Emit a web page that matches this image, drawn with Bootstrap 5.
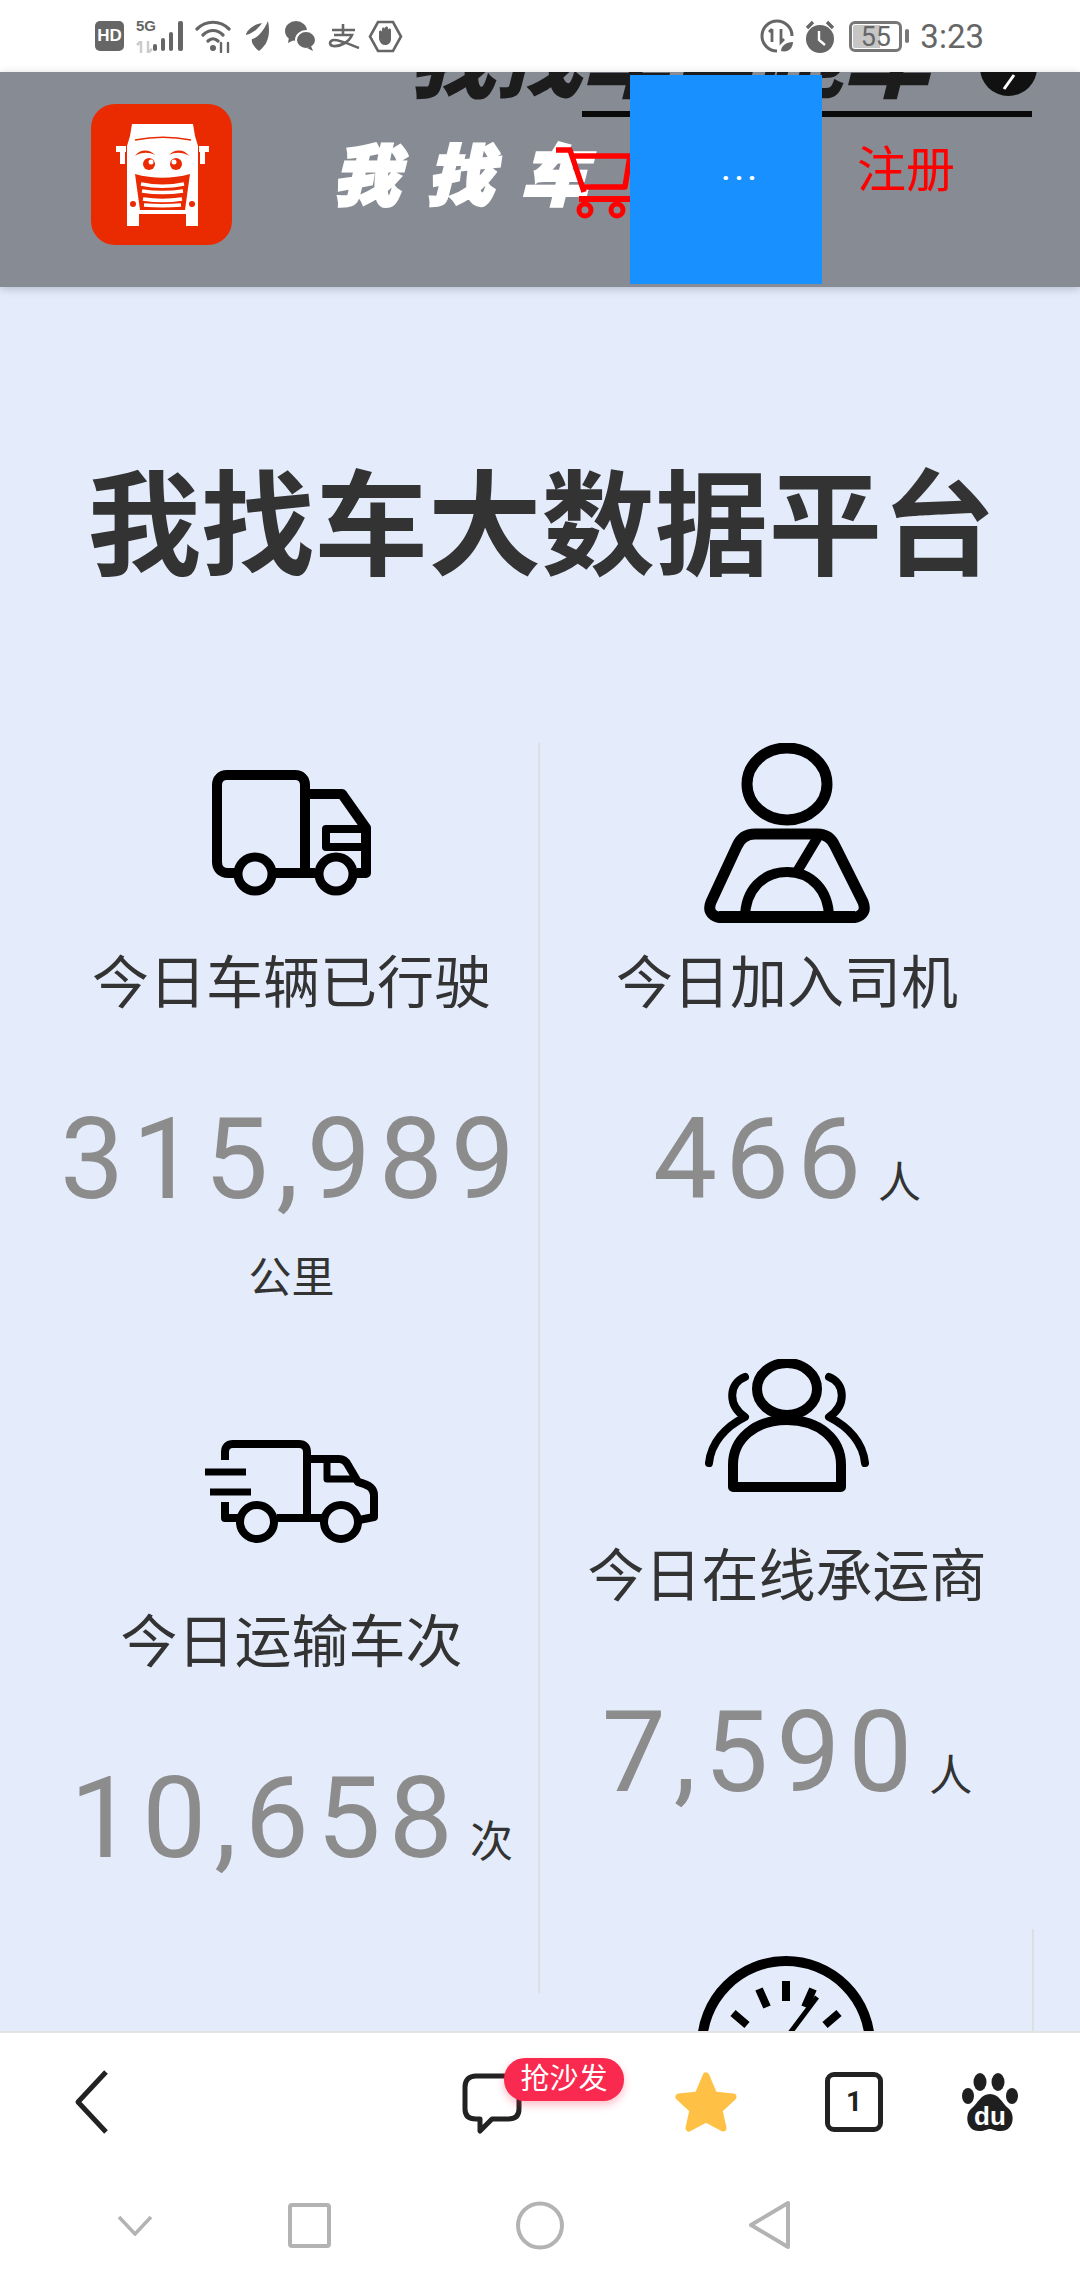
<!DOCTYPE html>
<html lang="zh-CN">
<head>
<meta charset="UTF-8">
<title>我找车大数据平台</title>
<link href="https://cdn.jsdelivr.net/npm/bootstrap@5.3.3/dist/css/bootstrap.min.css" rel="stylesheet">
<style>
    html, body { height: 100%; overflow: hidden; }
    body { background: #e4ecfb; font-family: Roboto, "Noto Sans CJK SC", sans-serif; color: #333; }
    .phone { height: 2280px; }

    .status-bar { height: 72px; padding: 0 96px 0 95px; color: #666; flex: none; }
    .status-bar svg { display: block; flex: none; }
    .gap-9 { margin-left: 9px; }
    .gap-11 { margin-left: 11px; }
    .gap-12 { margin-left: 12px; }
    .gap-14 { margin-left: 14px; }
    .gap-15 { margin-left: 15px; }
    .hd-tag { width: 29px; height: 30px; background: #666; color: #fff; border-radius: 5px; font: 700 17px/30px "Liberation Sans", sans-serif; text-align: center; }
    .net-tag { font: 700 15px/14px "Liberation Sans", sans-serif; width: 17px; }
    .battery { width: 53px; height: 31px; border: 3px solid #777; border-radius: 6px; font: 400 27px/25px Roboto, sans-serif; text-align: center; background: linear-gradient(to right, #c6c6c6 60%, transparent 60%); background-clip: content-box; padding: 1px; }
    .battery-nub { width: 4px; height: 14px; background: #777; border-radius: 2px; margin-left: 3px; }
    .clock { font: 400 33px/1 Roboto, sans-serif; margin-left: 11px; }

    .top-head { height: 215px; background: #878b93; flex: none; box-shadow: 0 2px 8px rgba(60,70,90,.28); z-index: 2; }
    .app-logo { width: 141px; height: 141px; background: #ea2a00; border-radius: 24px; margin-left: 91px; margin-top: -11px; flex: none; }
    .brand-name { margin-left: 101px; margin-top: -17px; color: #fff; font: italic 900 66px/1 "Noto Sans CJK SC", sans-serif; letter-spacing: 28px; white-space: nowrap; -webkit-text-stroke: 3px #fff; }
    .banner-text { left: 408px; top: -62px; font: italic 900 87px/1 "Noto Sans CJK SC", sans-serif; color: #1c1c1c; white-space: nowrap; }
    .banner-go { left: 980px; top: -33px; width: 57px; height: 57px; background: #111; border-radius: 50%; }
    .banner-line { left: 582px; top: 39px; width: 450px; height: 6px; background: #0a0a0a; }
    .cart-icon { left: 555px; top: 75px; }
    .more-box { left: 630px; top: 3px; width: 192px; height: 209px; background: #1890ff; color: #fff; font: 700 28px/1 Roboto, sans-serif; padding-bottom: 18px; padding-left: 31px; letter-spacing: 5px; }
    .reg-link { margin-left: auto; margin-right: 125px; margin-top: -18px; color: #f00; font-size: 49px; line-height: 1; font-weight: 400; }

    .main-area { min-height: 0; overflow: hidden; }
    .page-title { font-size: 113.5px; font-weight: 700; line-height: 1; margin: 0; padding: 184px 0 0 3px; height: 456px; color: #333; }
    .stat-cols { padding-left: 45px; }
    .stat-col { width: 494px; flex: none; }
    .stat-col-first { height: 1250px; border-right: 2px solid #dcdfe4; width: 495px; }
    .stat-item { min-height: 593px; }
    .stat-item-wrap { min-height: 659px; }
    .stat-item-edge { border-right: 2px solid #dcdfe4; }
    .stat-icon { height: 180px; }
    .stat-label { margin-top: 23px; font-size: 57px; line-height: 76px; font-weight: 400; color: #333; }
    .stat-num { margin-top: 70px; font: 400 114px/134px Roboto, sans-serif; color: #8c8c8c; letter-spacing: 8px; white-space: nowrap; }
    .stat-unit { font-size: 43px; letter-spacing: 0; color: #333; font-weight: 400; margin-left: 9px; font-family: "Noto Sans CJK SC", sans-serif; }
    .stat-unit-line { font-size: 43px; line-height: 66px; margin-top: 19px; font-weight: 400; color: #333; }

    .bottom-bar { height: 249px; flex: none; border-top: 2px solid #e3e3e3; background: #fff; z-index: 2; }
    .tool-row { height: 137px; padding: 0 61px 0 73px; }
    .tool-row svg { display: block; }
    .tool-comment { margin-left: auto; width: 60px; height: 60px; margin-top: 3px; }
    .sofa-tag { left: 42px; top: -15px; width: 120px; height: 43px; background: #f9294f; color: #fff; border-radius: 21px; font-size: 29px; line-height: 43px; text-align: center; box-shadow: 0 4px 8px rgba(249,41,79,.3); font-weight: 400; }
    .tool-star { margin-left: 153px; }
    .tool-tab { margin-left: 88px; width: 58px; height: 60px; border: 5px solid #222; border-radius: 9px; font: 700 28px/50px Roboto, sans-serif; text-align: center; color: #222; }
    .tool-paw { margin-left: 79px; }
    .nav-row { height: 110px; padding-left: 117px; }
    .nav-row svg { display: block; }
    .nav-square { margin-left: 135px; }
    .nav-circle { margin-left: 185px; }
    .nav-back { margin-left: 185px; }
</style>
</head>
<body>
<div class="phone d-flex flex-column">

    <div class="status-bar bg-white d-flex align-items-center">
        <div class="d-flex align-items-center">
            <div class="hd-tag">HD</div>
            <div class="gap-12 d-flex flex-column net-tag">5G
                <svg width="17" height="12" viewBox="0 0 17 12" class="mt-2"><path d="M5 0v12M1 4l4-4M12 0v12l4-4" fill="none" stroke="#ccc" stroke-width="2.5"/></svg>
            </div>
            <svg width="33" height="32" viewBox="0 0 33 32"><g fill="#666"><rect x="0" y="24" width="4" height="7" rx="2"/><rect x="8" y="18" width="4" height="13" rx="2"/><rect x="16" y="12" width="4" height="19" rx="2"/><rect x="25" y="1" width="5" height="30" rx="2"/></g></svg>
            <svg class="gap-9" width="38" height="34" viewBox="0 0 38 34" fill="none" stroke="#666" stroke-width="3.200" stroke-linecap="round"><path d="M2 10C11 1 25 1 34 10M8 16c6-6 14-6 20 0M13 22c3-3 7-3 10 0"/><circle cx="18" cy="29" r="3" fill="#666" stroke="none"/><path d="M26 24v9M33 24v9" stroke-width="2.400"/></svg>
            <svg class="gap-12" width="25" height="30" viewBox="0 0 25 30" fill="#666"><path d="M23 0c2 10 2 22-9 30C8 25 6 21 7 18 11 18 19 10 23 0zM17 2C13 8 7 13 1 14c0-4 8-11 16-12z"/></svg>
            <svg class="gap-15" width="31" height="30" viewBox="0 0 31 30" fill="#666"><ellipse cx="11" cy="10" rx="11" ry="10"/><path d="M4 16l-1 6 6-3z"/><ellipse cx="21" cy="19" rx="10" ry="9" stroke="#fff" stroke-width="2"/><path d="M26 25l2 5-6-3z"/></svg>
            <svg class="gap-12" width="32" height="26" viewBox="0 0 32 26" fill="none" stroke="#666" stroke-width="2.600"><path d="M4 7h23M15 1v11M6 12h18C21 19 12 24 5 23c-5-1-3-6 1-6 7 0 17 5 25 8"/></svg>
            <svg class="ms-2" width="35" height="33" viewBox="0 0 35 33"><path d="M10 2h15l8 14.500-8 14.500H10L2 16.500z" fill="none" stroke="#666" stroke-width="2.600"/><path d="M11 12c0-2 3-2 3 0V9c0-2 3-2 3 0v-1c0-2 3-2 3 0v2c0-2 3-2 3 0v9c0 4-3 6-6 6s-5-2-6-6z" fill="#666"/></svg>
        </div>
        <div class="ms-auto d-flex align-items-center">
            <svg width="34" height="34" viewBox="0 0 34 34" fill="none" stroke="#666" stroke-width="3"><path d="M17 32A15 15 0 1 1 32 17"/><path d="M12 10v13M9 13l3-3M21 10v13l3-3" stroke-width="2.800"/><path d="M21 32c0-5 5-9 12-9 0 6-5 11-12 9z" fill="#666" stroke="none"/></svg>
            <svg class="gap-11" width="30" height="33" viewBox="0 0 30 33"><circle cx="15" cy="19" r="14" fill="#666"/><path d="M14 11v9l6 5" fill="none" stroke="#fff" stroke-width="2.400"/><path d="M2 8l6-6M28 8l-6-6" stroke="#666" stroke-width="3.400"/></svg>
            <div class="battery gap-14">55</div>
            <div class="battery-nub"></div>
            <div class="clock">3:23</div>
        </div>
    </div>

    <div class="top-head d-flex align-items-center position-relative overflow-hidden">
        <div class="banner-text position-absolute">我找车里跑车</div>
        <svg class="banner-go position-absolute" viewBox="0 0 57 57"><path d="M24 50l10-14" stroke="#fff" stroke-width="3" fill="none"/></svg>
        <div class="banner-line position-absolute"></div>

        <div class="app-logo">
            <svg width="141" height="141" viewBox="0 0 141 141">
                <g fill="#fff">
                    <path d="M41 20h61l2 12 3 10v68H36V42l3-10z"/>
                    <rect x="25" y="42" width="10" height="6"/><rect x="29" y="46" width="5" height="14"/>
                    <rect x="108" y="42" width="10" height="6"/><rect x="109" y="46" width="5" height="14"/>
                    <rect x="36" y="108" width="12" height="14"/><rect x="95" y="108" width="12" height="14"/>
                </g>
                <path d="M44 36c20-4 36-4 56 0" fill="none" stroke="#ea2a00" stroke-width="1.500"/>
                <g fill="#ea2a00">
                    <path d="M44 52c5-7 14-7 20-1-6-3-14-3-20 1zM78 51c6-6 15-6 20 1-6-4-14-4-20-1z"/>
                    <circle cx="58" cy="60" r="6"/><circle cx="85" cy="60" r="6"/>
                    <path d="M44 70c18 5 37 5 55 0l-5 36H49z"/>
                    <circle cx="42" cy="100" r="3"/><circle cx="101" cy="100" r="3"/>
                </g>
                <circle cx="60" cy="58" r="2.500" fill="#fff"/><circle cx="83" cy="58" r="2.500" fill="#fff"/>
                <g fill="none" stroke="#fff" stroke-width="3.500">
                    <path d="M50 80c14 3 29 3 43 0M51 87c13 2 28 2 41 0M52 95c13 2 26 2 39 0M53 101c12 1 25 1 37 0"/>
                </g>
            </svg>
        </div>
        <div class="brand-name">我找车</div>

        <svg class="cart-icon position-absolute" width="80" height="72" viewBox="0 0 80 72" fill="none" stroke="#f00" stroke-width="5.500" stroke-linejoin="round">
            <path d="M1 3h14l14 42"/><path d="M17 9h58l-5 31H28"/><path d="M24 52h53" stroke-width="6"/>
            <circle cx="30" cy="63" r="6" stroke-width="5"/><circle cx="62" cy="63" r="6" stroke-width="5"/>
        </svg>
        <div class="more-box position-absolute d-flex align-items-center justify-content-center">...</div>
        <div class="reg-link">注册</div>
    </div>

    <div class="main-area flex-grow-1">
        <h1 class="page-title text-center">我找车大数据平台</h1>
        <div class="stat-cols d-flex">
            <div class="stat-col stat-col-first">
                <div class="stat-item stat-item-wrap text-center">
                    <div class="stat-icon d-flex align-items-center justify-content-center">
                        <svg width="159" height="126" viewBox="0 0 159 126" fill="none" stroke="#000" stroke-width="10" stroke-linejoin="round">
                            <path d="M24 103H16C9 103 5 98 5 92V15C5 9 9 5 15 5h68c6 0 10 4 10 10v88H62"/>
                            <path d="M93 24h37l24 34v45h-9M103 103h-10"/>
                            <path d="M114 59h40v18h-40z" stroke-width="8"/>
                            <circle cx="43" cy="104" r="17" stroke-width="9"/><circle cx="124" cy="104" r="17" stroke-width="9"/>
                        </svg>
                    </div>
                    <div class="stat-label">今日车辆已行驶</div>
                    <div class="stat-num">315,989</div>
                    <div class="stat-unit-line">公里</div>
                </div>
                <div class="stat-item text-center">
                    <div class="stat-icon d-flex align-items-center justify-content-center">
                        <svg width="174" height="104" viewBox="0 0 174 104" fill="none" stroke="#000" stroke-width="8" stroke-linejoin="round">
                            <path d="M20 20V12c0-5 3-8 8-8h66c5 0 8 3 8 8v66H72"/><path d="M20 62v16h13"/>
                            <path d="M0 32h41M5 52h41" stroke-width="7"/>
                            <path d="M102 19h32c4 0 7 2 9 6l10 17c9 2 16 5 16 13v22l-15 3M102 78h15"/>
                            <path d="M122 19v20h30" stroke-width="7"/>
                            <circle cx="52" cy="82" r="17"/><circle cx="136" cy="82" r="17"/>
                        </svg>
                    </div>
                    <div class="stat-label">今日运输车次</div>
                    <div class="stat-num">10,658<span class="stat-unit">次</span></div>
                </div>
            </div>

            <div class="stat-col">
                <div class="stat-item text-center">
                    <div class="stat-icon d-flex align-items-center justify-content-center">
                        <svg width="168" height="180" viewBox="0 0 168 180" fill="none" stroke="#000" stroke-width="11" stroke-linejoin="round">
                            <ellipse cx="84" cy="41" rx="40" ry="36"/>
                            <path d="M52 91h62c9 0 15 5 18 12l28 56c4 10-2 16-14 16H22C10 175 4 169 8 159l26-56c3-7 9-12 18-12z"/>
                            <path d="M116 92l-24 40M42 175c0-28 18-46 42-46s42 18 42 46" stroke-width="10"/>
                            <path d="M16 174h136" stroke-width="12"/>
                        </svg>
                    </div>
                    <div class="stat-label">今日加入司机</div>
                    <div class="stat-num">466<span class="stat-unit">人</span></div>
                </div>
                <div class="stat-item text-center">
                    <div class="stat-icon d-flex align-items-center justify-content-center">
                        <svg width="164" height="134" viewBox="0 0 164 134" fill="none" stroke="#000" stroke-width="10" stroke-linecap="round" stroke-linejoin="round">
                            <ellipse cx="82" cy="30" rx="30" ry="26"/>
                            <path d="M28 128v-22c0-26 22-45 54-45s54 19 54 45v22z"/>
                            <path d="M40 18C24 24 22 46 40 58 20 68 6 84 4 104M124 18c16 6 18 28 0 40 20 10 34 26 36 46" stroke-width="8"/>
                        </svg>
                    </div>
                    <div class="stat-label">今日在线承运商</div>
                    <div class="stat-num">7,590<span class="stat-unit">人</span></div>
                </div>
                <div class="stat-item stat-item-edge text-center">
                    <div class="stat-icon d-flex align-items-end justify-content-center">
                        <svg width="178" height="158" viewBox="0 0 178 158" fill="none" stroke="#000" stroke-width="10">
                            <circle cx="89" cy="94" r="84"/>
                            <path d="M89 30v20M62 38l8 18M116 38l-8 18M36 62l14 12M142 62l-14 12" stroke-width="8"/>
                            <path d="M120 46L84 94" stroke-width="5"/>
                        </svg>
                    </div>
                </div>
            </div>
        </div>
    </div>

    <div class="bottom-bar">
        <div class="tool-row d-flex align-items-center">
            <svg width="36" height="64" viewBox="0 0 36 64" fill="none" stroke="#222" stroke-width="5"><path d="M33 2L5 32l28 30" stroke-linejoin="round"/></svg>
            <div class="tool-comment position-relative">
                <svg width="60" height="62" viewBox="0 0 60 62" fill="none" stroke="#222" stroke-width="5" stroke-linejoin="round"><path d="M14 3h32c7 0 11 4 11 11v22c0 7-4 10-11 10H30L18 58V46h-4C7 46 3 43 3 36V14C3 7 7 3 14 3z"/></svg>
                <div class="sofa-tag position-absolute">抢沙发</div>
            </div>
            <svg class="tool-star" width="62" height="60" viewBox="0 0 62 60"><path d="M31 4l8 19 19 2-14 13 4 18-17-9-17 9 4-18L4 25l19-2z" fill="#ffc145" stroke="#ffc145" stroke-width="7" stroke-linejoin="round"/></svg>
            <div class="tool-tab">1</div>
            <svg class="tool-paw" width="57" height="60" viewBox="0 0 57 60">
                <g fill="#1f1f1f">
                    <ellipse cx="18" cy="10" rx="6.500" ry="9"/><ellipse cx="36" cy="10" rx="6.500" ry="9"/>
                    <ellipse cx="6" cy="24" rx="6" ry="8"/><ellipse cx="50" cy="24" rx="6" ry="8"/>
                    <path d="M28 22c9 0 12 9 18 14 8 6 6 24-8 23-5 0-7-2-10-2s-5 2-10 2C4 60 2 42 10 36c6-5 9-14 18-14z"/>
                </g>
                <text x="28" y="53" text-anchor="middle" fill="#fff" font-family="Liberation Sans, sans-serif" font-weight="700" font-size="26">du</text>
            </svg>
        </div>
        <div class="nav-row d-flex align-items-center">
            <svg width="36" height="21" viewBox="0 0 36 21" fill="none" stroke="#b3b3b3" stroke-width="3.500"><path d="M2 2l16 17L34 2"/></svg>
            <svg class="nav-square" width="43" height="45" viewBox="0 0 43 45" fill="none" stroke="#b3b3b3" stroke-width="4"><rect x="2" y="2" width="39" height="41" rx="2"/></svg>
            <svg class="nav-circle" width="48" height="49" viewBox="0 0 48 49" fill="none" stroke="#b3b3b3" stroke-width="4"><circle cx="24" cy="24.500" r="22"/></svg>
            <svg class="nav-back" width="41" height="48" viewBox="0 0 41 48" fill="none" stroke="#b3b3b3" stroke-width="4" stroke-linejoin="round"><path d="M39 2v44L2 24z"/></svg>
        </div>
    </div>
</div>
<script src="https://cdn.jsdelivr.net/npm/bootstrap@5.3.3/dist/js/bootstrap.bundle.min.js"></script>
</body>
</html>
